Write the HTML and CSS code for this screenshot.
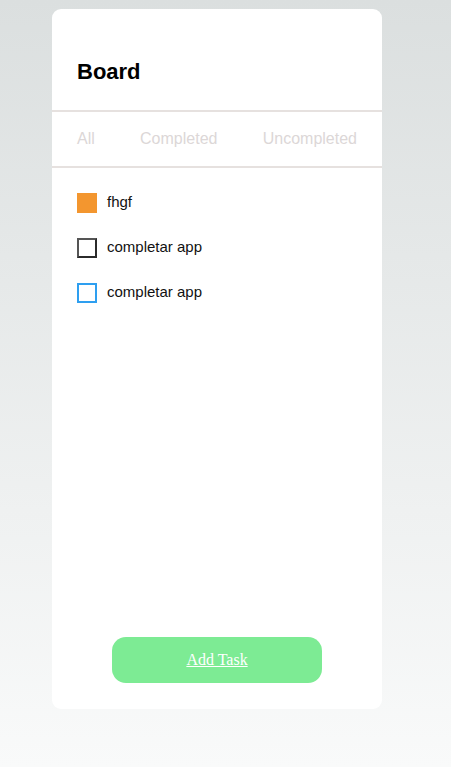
FILE: index.html
```html
<!DOCTYPE html>
<html>
<head>
<meta charset="utf-8">
<link rel="stylesheet" href="styles.css">
</head>
<body>
<div class="card">
  <header class="head"><h1 class="title">Board</h1></header>
  <nav class="tabs">
    <span class="tab">All</span>
    <span class="tab">Completed</span>
    <span class="tab">Uncompleted</span>
  </nav>
  <ul class="list">
    <li class="item"><span class="box box-done"></span><span class="label">fhgf</span></li>
    <li class="item"><span class="box box-dark"></span><span class="label">completar app</span></li>
    <li class="item"><span class="box box-blue"></span><span class="label">completar app</span></li>
  </ul>
  <div class="foot"><button class="add"><a href="#" class="add-link">Add Task</a></button></div>
</div>
</body>
</html>
```
FILE: styles.css
```css
html, body { margin: 0; padding: 0; }
body {
  min-height: 767px;
  background: linear-gradient(to bottom, #dbdfdf 0%, #f9fafa 100%);
  font-family: "Liberation Sans", Arial, sans-serif;
  padding-top: 9px;
  box-sizing: border-box;
}
.card {
  margin-left: 52px;
  width: 330px;
  height: 700px;
  background: #fff;
  border-radius: 9px;
  display: flex;
  flex-direction: column;
}
.head {
  padding: 50px 25px 0;
  height: 51px;
  border-bottom: 2px solid #e6e1df;
}
.title {
  margin: 0;
  font-size: 22px;
  line-height: 25px;
  font-weight: bold;
  color: #000;
}
.tabs {
  display: flex;
  justify-content: space-between;
  padding: 18px 25px;
  border-bottom: 2px solid #e6e1df;
}
.tab {
  font-size: 16px;
  line-height: 18px;
  color: #dcd7d7;
}
.list {
  list-style: none;
  margin: 0;
  padding: 25px 25px 0;
  flex: 1;
  display: flex;
  flex-direction: column;
  gap: 25px;
}
.item {
  display: flex;
  align-items: flex-start;
  gap: 10px;
  height: 20px;
}
.box {
  width: 20px;
  height: 20px;
  box-sizing: border-box;
  flex: none;
}
.box-done { background: #f3962f; }
.box-dark { border: 2px solid #2b2b2b; border-top-color: #555; border-left-color: #555; }
.box-blue { border: 2px solid #2e9ff0; }
.label {
  font-size: 15px;
  line-height: 17px;
  color: #111;
}
.foot {
  display: flex;
  justify-content: center;
  padding-bottom: 26px;
}
.add {
  width: 210px;
  height: 46px;
  border: none;
  border-radius: 14px;
  background: #7deb94;
  padding: 0;
  display: flex;
  align-items: center;
  justify-content: center;
}
.add-link {
  font-family: "Liberation Serif", "Times New Roman", serif;
  font-size: 16px;
  color: #fff;
  text-decoration: underline;
}
```
